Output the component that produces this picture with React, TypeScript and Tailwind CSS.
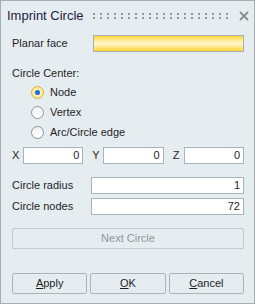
import React from "react";

const font = { fontFamily: '"Liberation Sans", Arial, sans-serif' };

function Radio({ label, checked }: { label: string; checked?: boolean }) {
  return (
    <div className="flex items-center h-[20px] pl-[19px] gap-[6px]">
      {checked ? (
        <span className="w-[13px] h-[13px] rounded-full border border-[#e0b030] bg-[radial-gradient(circle,#fff6d0,#ffe27a)] flex items-center justify-center">
          <span className="w-[5px] h-[5px] rounded-full bg-[#1f6fd6]" />
        </span>
      ) : (
        <span className="w-[13px] h-[13px] rounded-full border border-[#8f9499] bg-[linear-gradient(to_bottom,#f2f2f2,#ffffff)]" />
      )}
      <span>{label}</span>
    </div>
  );
}

function Field({ value, className = "" }: { value: string; className?: string }) {
  return (
    <div
      className={`h-[17px] bg-white border border-[#abb3ba] text-right pr-[3px] leading-[15px] ${className}`}
    >
      {value}
    </div>
  );
}

function Btn({ children, disabled }: { children: React.ReactNode; disabled?: boolean }) {
  return (
    <div
      className={`h-[21px] rounded-[2px] border flex items-center justify-center ${
        disabled ? "border-[#c2c8cd] text-[#8f969c]" : "border-[#adb3b8] text-[#1e1e1e]"
      }`}
    >
      {children}
    </div>
  );
}

export default function App() {
  const dots = Array.from({ length: 20 }, (_, i) => i);
  return (
    <div
      className="w-[255px] h-[304px] border border-[#a7aeb4] bg-[#e6edf1] text-[#1e1e1e] text-[11px] flex flex-col"
      style={font}
    >
      {/* title bar */}
      <div className="h-[30px] flex items-center pl-[6px] pr-[5px]">
        <span className="text-[13px] text-[#1c2040] w-[86px]">Imprint Circle</span>
        <svg width="136" height="8" className="mt-[1px]">
          {dots.map((i) => (
            <g key={i} fill="#8e969e">
              <rect x={i * 7} y={0} width={2} height={2} />
              <rect x={i * 7} y={4} width={2} height={2} />
            </g>
          ))}
        </svg>
        <svg width="10" height="10" className="ml-auto" viewBox="0 0 10 10">
          <path d="M1 1 L9 9 M9 1 L1 9" stroke="#8c8c8c" strokeWidth="1.8" />
        </svg>
      </div>

      <div className="px-[11px] pr-[10px] flex flex-col">
        <div className="flex items-center h-[17px] mt-[4px]">
          <span className="w-[81px]">Planar face</span>
          <div className="flex-1 h-[17px] border border-[#a9b0b6] bg-[linear-gradient(to_bottom,#ffd63a,#fff4c6_45%,#fff4c6_55%,#ffd42a)]" />
        </div>

        <div className="h-[16px] leading-[16px] mt-[13px]">Circle Center:</div>
        <div className="mt-[1px]">
          <Radio label="Node" checked />
          <Radio label="Vertex" />
          <Radio label="Arc/Circle edge" />
        </div>

        <div className="grid grid-cols-3 gap-[9px] mt-[5px]">
          {["X", "Y", "Z"].map((l) => (
            <div key={l} className="flex items-center">
              <span className="w-[11px]">{l}</span>
              <Field value="0" className="flex-1" />
            </div>
          ))}
        </div>

        <div className="flex items-center mt-[13px]">
          <span className="w-[79px]">Circle radius</span>
          <Field value="1" className="flex-1" />
        </div>
        <div className="flex items-center mt-[4px]">
          <span className="w-[79px]">Circle nodes</span>
          <Field value="72" className="flex-1" />
        </div>

        <div className="mt-[13px]">
          <Btn disabled>Next Circle</Btn>
        </div>

        <div className="grid grid-cols-3 gap-[3px] mt-[24px]">
          <Btn>
            <span>
              <span className="underline">A</span>pply
            </span>
          </Btn>
          <Btn>
            <span>
              <span className="underline">O</span>K
            </span>
          </Btn>
          <Btn>
            <span>
              <span className="underline">C</span>ancel
            </span>
          </Btn>
        </div>
      </div>
    </div>
  );
}
